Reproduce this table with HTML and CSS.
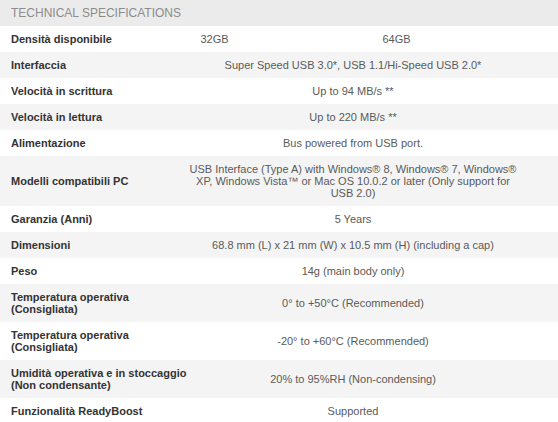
FILE: index.html
```html
<!DOCTYPE html>
<html lang="it">
<head>
<meta charset="utf-8">
<title>Technical Specifications</title>
<link rel="stylesheet" href="styles.css">
</head>
<body>
<section class="specs">
  <h2 class="specs-title">TECHNICAL SPECIFICATIONS</h2>
  <div class="spec-row spec-row-density">
    <div class="spec-label">Densità disponibile</div>
    <div class="spec-value">32GB</div>
    <div class="spec-value">64GB</div>
  </div>
  <div class="spec-row">
    <div class="spec-label">Interfaccia</div>
    <div class="spec-value">Super Speed USB 3.0*, USB 1.1/Hi-Speed USB 2.0*</div>
  </div>
  <div class="spec-row">
    <div class="spec-label">Velocità in scrittura</div>
    <div class="spec-value">Up to 94 MB/s **</div>
  </div>
  <div class="spec-row">
    <div class="spec-label">Velocità in lettura</div>
    <div class="spec-value">Up to 220 MB/s **</div>
  </div>
  <div class="spec-row">
    <div class="spec-label">Alimentazione</div>
    <div class="spec-value">Bus powered from USB port.</div>
  </div>
  <div class="spec-row">
    <div class="spec-label">Modelli compatibili PC</div>
    <div class="spec-value">USB Interface (Type A) with Windows® 8, Windows® 7, Windows® XP, Windows Vista™ or Mac OS 10.0.2 or later (Only support for USB 2.0)</div>
  </div>
  <div class="spec-row">
    <div class="spec-label">Garanzia (Anni)</div>
    <div class="spec-value">5 Years</div>
  </div>
  <div class="spec-row">
    <div class="spec-label">Dimensioni</div>
    <div class="spec-value">68.8 mm (L) x 21 mm (W) x 10.5 mm (H) (including a cap)</div>
  </div>
  <div class="spec-row">
    <div class="spec-label">Peso</div>
    <div class="spec-value">14g (main body only)</div>
  </div>
  <div class="spec-row">
    <div class="spec-label">Temperatura operativa (Consigliata)</div>
    <div class="spec-value">0° to +50°C (Recommended)</div>
  </div>
  <div class="spec-row">
    <div class="spec-label">Temperatura operativa (Consigliata)</div>
    <div class="spec-value">-20° to +60°C (Recommended)</div>
  </div>
  <div class="spec-row">
    <div class="spec-label">Umidità operativa e in stoccaggio (Non condensante)</div>
    <div class="spec-value">20% to 95%RH (Non-condensing)</div>
  </div>
  <div class="spec-row">
    <div class="spec-label">Funzionalità ReadyBoost</div>
    <div class="spec-value">Supported</div>
  </div>
</section>
</body>
</html>
```

FILE: styles.css
```css
html, body {
  margin: 0;
  padding: 0;
  background: #ffffff;
}

body {
  font-family: "Liberation Sans", Arial, sans-serif;
  font-size: 11px;
  color: #555555;
}

.specs {
  width: 558px;
}

.specs-title {
  margin: 0;
  height: 26px;
  box-sizing: border-box;
  padding: 6px 11px 0;
  background: #ebebeb;
  color: #8c8c8c;
  font-size: 12px;
  font-weight: normal;
  line-height: 14px;
}

.spec-row {
  display: grid;
  grid-template-columns: 188px 330px;
  align-items: center;
  padding: 7px 0;
  line-height: 12px;
}

.spec-row:nth-of-type(even) {
  background: #f4f4f4;
}

.spec-row-density {
  grid-template-columns: 188px 53px 311px;
}

.spec-label {
  padding-left: 11px;
  margin-right: -5px;
  font-weight: bold;
  color: #333333;
}

.spec-value {
  text-align: center;
  color: #5a5a5a;
}
```
